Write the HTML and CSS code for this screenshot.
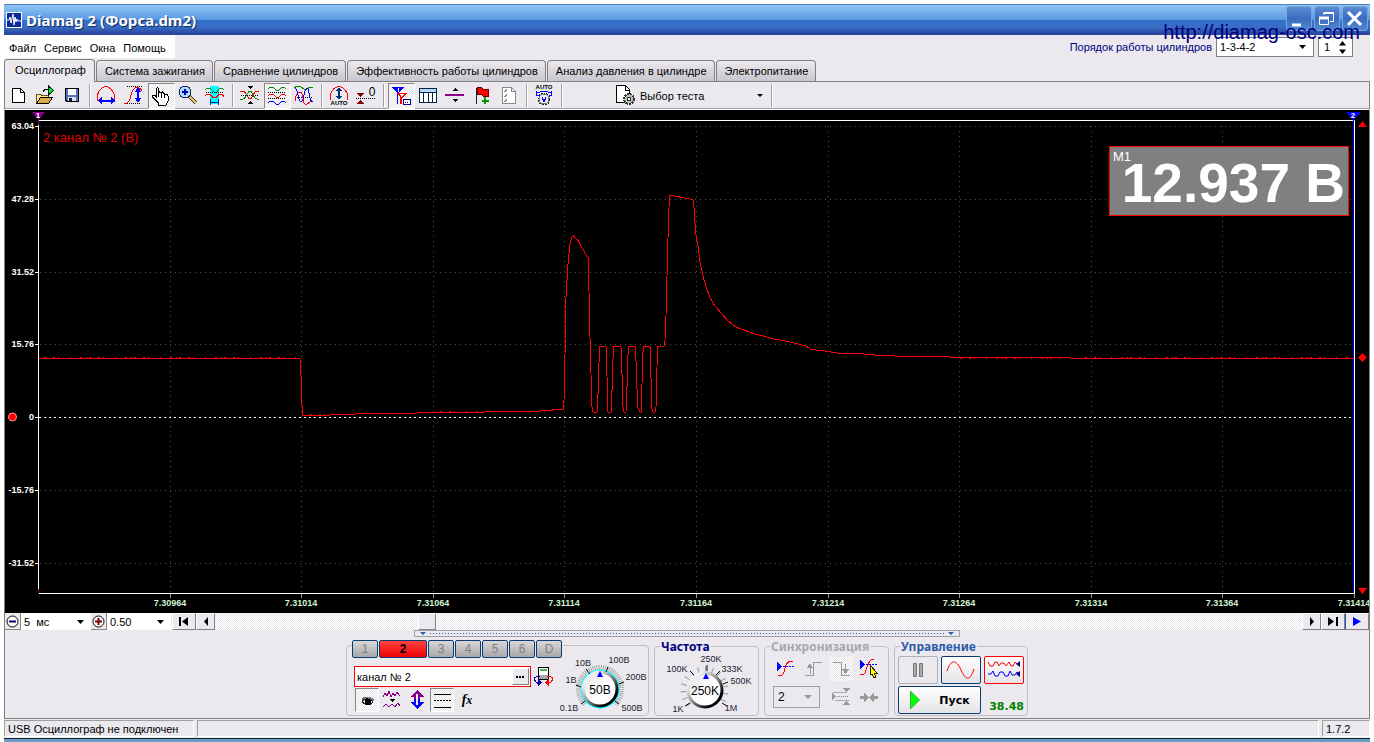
FILE: index.html
```html
<!DOCTYPE html>
<html lang="ru">
<head>
<meta charset="utf-8">
<title>Diamag 2 (Форса.dm2)</title>
<link rel="stylesheet" href="styles.css">
</head>
<body>
<div class="window">
  <header class="titlebar">
    <svg class="app-icon" width="16" height="16" viewBox="0 0 16 16"><rect x=".5" y=".5" width="15" height="15" fill="#0a2a9a" stroke="#fff"/><path d="M1 8h2l1-3 1 6 2-9 1 11 1-8 1 5 1-3 1 2h3" fill="none" stroke="#fff"/></svg>
    <h1>Diamag 2 (Форса.dm2)</h1>
    <div class="win-buttons">
      <button aria-label="Свернуть"><svg width="24" height="24"><path d="M5 18h9" stroke="#fff" stroke-width="3"/></svg></button>
      <button aria-label="Развернуть"><svg width="24" height="24" fill="none" stroke="#fff"><path d="M9 8V5.500h9.500v9H15" /><path d="M8.500 6h10.500" stroke-width="2"/><path d="M4.500 10.500h9v7h-9z"/><path d="M4 11h10" stroke-width="3"/></svg></button>
      <button aria-label="Закрыть"><svg width="24" height="24"><path d="M5 5l13 13M18 5L5 18" stroke="#fff" stroke-width="3"/></svg></button>
    </div>
    <a class="site" href="#">http://diamag-osc.com</a>
  </header>

  <div class="menurow">
    <nav class="menu"><button>Файл</button><button>Сервис</button><button>Окна</button><button>Помощь</button></nav>
    <div class="order">
      <label for="order">Порядок работы цилиндров</label>
      <select id="order" class="drop order-select"><option>1-3-4-2</option></select>
      <span class="spin"><input type="text" value="1" aria-label="Цилиндр"><svg width="9" height="13"><path d="M1 4.500h7L4.500 0zM1 8.500h7L4.500 13z"/></svg></span>
    </div>
  </div>

  <nav class="tabs">
    <button class="active">Осциллограф</button><button>Система зажигания</button><button>Сравнение цилиндров</button><button>Эффективность работы цилиндров</button><button>Анализ давления в цилиндре</button><button>Электропитание</button>
  </nav>

  <div class="toolbar">
    <button aria-label="Новый"><svg viewBox="0 0 24 24"><path d="M6.500 4.500h8l4 4v9.500h-12zM14.500 4.500v4h4" fill="#fff" stroke="#000"/></svg></button>
    <button aria-label="Открыть"><svg viewBox="0 0 24 24"><path d="M3.500 19v-9h4l1 1h7v3" fill="#ffe98a" stroke="#665522"/><path d="M3.500 19.500l4-6h12l-4 6z" fill="#d9a94a" stroke="#000"/><path d="M10 8c1-3 3-3 5-3" fill="none" stroke="#000"/><path d="M15.500 2v9l5-4.500z" fill="#0d3" stroke="#020"/></svg></button>
    <button aria-label="Сохранить"><svg viewBox="0 0 24 24"><path d="M5.500 4.500h13v13H7l-1.500-1.500z" fill="#5472b8" stroke="#000"/><path d="M8 5h8v6H8z" fill="#fff"/><path d="M8 13h8v4H8z" fill="#dde"/><path d="M9 14h3v3H9z" fill="#024"/></svg></button>
    <i class="sep"></i>
    <button aria-label="Период"><svg viewBox="0 0 24 24"><path d="M2.500 17V11c1-5 5-8 8-8.500 4 0 7 3.500 9 8.500v6" fill="none" stroke="red"/><path d="M4 16.500h16" stroke="#00f" stroke-width="2"/><path d="M7 13v7l-4-3.500zM16 13v7l4-3.500z" fill="#00f"/></svg></button>
    <button aria-label="Амплитуда"><svg viewBox="0 0 24 24"><path d="M5 2.500h15M5 19.500h13" stroke="#000" stroke-dasharray="1 1"/><path d="M2 19.500c5 0 6-3 7-8s3-8 6-8 4 1 5 3" fill="none" stroke="red"/><path d="M16 5v13" stroke="#00f" stroke-width="2"/><path d="M12.500 8h7L16 3zM12.500 14h7l-3.500 5z" fill="#00f"/></svg></button>
    <button class="on" aria-label="Рука"><svg viewBox="0 0 24 24"><path d="M9.500 21v-2l-6-6v-2h2l2 2V4.500l1-1 1 1V9l1-1 2 1 1-1 2 2h2l1.500 2v5l-2 4z" fill="#fff" stroke="#000"/><path d="M9.500 9v4M12.500 10v4M15.500 10v4" stroke="#000"/></svg></button>
    <button aria-label="Лупа"><svg viewBox="0 0 24 24"><path d="M13 12l7 7" stroke="#333" stroke-width="4"/><path d="M14 13l6 6" stroke="#e9c258" stroke-width="2"/><circle cx="9" cy="8" r="6" fill="#a8dcfa" stroke="#226"/><path d="M6 8h6M9 5v6" stroke="#00a" stroke-width="2"/></svg></button>
    <button aria-label="Выделение"><svg viewBox="0 0 24 24"><path d="M7 2h9v18H7z" fill="#0ff"/><path d="M2 6l2-2h3l4 4h3l3-4h2l2 2" fill="none" stroke="#0a8a2a"/><path d="M3 8.500h18" stroke="#000" stroke-dasharray="1 1"/><path d="M2 11.500l2-1h3l3 3h3l3-3h3l2 2" fill="none" stroke="red"/><path d="M7.500 15v6M15.500 15v6M8 18.500h7" stroke="#003090"/></svg></button>
    <i class="sep"></i>
    <button aria-label="Наложение"><svg viewBox="0 0 24 24"><path d="M3 11.500h18" stroke="#000" stroke-dasharray="1 1"/><path d="M2 7h3c4 1 4 8 7 8s3-8 7-8h2" fill="none" stroke="red"/><path d="M2 15h3c4-1 4-8 7-8s3 8 7 8h2" fill="none" stroke="#080"/><path d="M9 2h6l-3 3zM9 20h6l-3-3z"/></svg></button>
    <button class="on" aria-label="Раздельно"><svg viewBox="0 0 24 24" fill="none"><path d="M3 5l2-2h3l3 3h3l3-3h2l2 2" stroke="#080"/><path d="M3 8.500h18M3 14.500h18" stroke="#000" stroke-dasharray="1 1"/><path d="M3 12l2-2h3l3 3h3l3-3h2l2 2" stroke="red"/><path d="M3 19l2-2h3l3 3h3l3-3h2l2 2" stroke="#00f"/></svg></button>
    <button aria-label="Совмещение"><svg viewBox="0 0 24 24" fill="none"><path d="M2 4l3-2h3l4 3h3l3-2 3 1" stroke="#080"/><path d="M3 13.500h18" stroke="#000" stroke-dasharray="1 1"/><path d="M3 17c1-11 8-11 8-3s3 6 4 6 2-2 5-3" stroke="red"/><path d="M3 4c3 0 3 14 6 14s3-14 6-14 1 14 6 14" stroke="#00f"/></svg></button>
    <i class="sep"></i>
    <button aria-label="Авто"><svg viewBox="0 0 24 24"><path d="M3.500 16v-6c1-4 5-7 8-7.500 4 0 7 3.500 9 7.500v6" fill="none" stroke="red"/><path d="M12 4v11" stroke="#003080" stroke-width="2"/><path d="M9 7h6l-3-4zM9 12h6l-3 4z" fill="#003080"/><text x="12" y="21" class="tiny">AUTO</text></svg></button>
    <button aria-label="Ноль"><svg viewBox="0 0 24 24"><path d="M2 14.500h19" stroke="#000" stroke-dasharray="1 1"/><path d="M3 9h7l-3.500 4zM3 20h7l-3.500-4z" fill="#800000"/><text x="18" y="12" class="zero">0</text></svg></button>
    <i class="sep"></i>
    <button class="on" aria-label="Фильтр"><svg viewBox="0 0 24 24"><path d="M3 3h12l-6 7z" fill="#00f"/><path d="M8.500 8v12" stroke="#00f"/><path d="M7 9h11l-5 6z" fill="red"/><path d="M12 13v7" stroke="red" stroke-width="2"/><path d="M9.500 4v4M11 10.500h3l-2 2" stroke="#fff" fill="none"/><path d="M14.500 15.500h7v5h-7z" fill="#fff" stroke="#008"/><path d="M16 18.500h4" stroke="#008" stroke-dasharray="1 1"/></svg></button>
    <button aria-label="Таблица"><svg viewBox="0 0 24 24"><path d="M3.500 4.500h17v14h-17z" fill="#fff" stroke="#024"/><path d="M4 5h16v3H4z" fill="#b4d8fa"/><path d="M4 8.500h16M7.500 8v10M12.500 8v10M16.500 8v10" stroke="#024"/></svg></button>
    <button aria-label="Линия"><svg viewBox="0 0 24 24"><path d="M2 11h19" stroke="#808" stroke-width="2"/><path d="M9 7h6l-3-3zM9 15h6l-3 3z"/></svg></button>
    <button aria-label="Флаг"><svg viewBox="0 0 24 24"><path d="M6.500 4v16" stroke="#222"/><path d="M7 4l4-1 2 2h5v7h-5l-2-2-4 1z" fill="red" stroke="#600"/><path d="M15 13v7M12 16.500h7" stroke="#090" stroke-width="2"/></svg></button>
    <button aria-label="Протокол"><svg viewBox="0 0 24 24"><path d="M5.500 3.500h9l4 4v12h-13z" fill="#fff" stroke="#888"/><path d="M14.500 3.500v4h4M7 7l1 1 2-3M7 12l1 1 2-3M7 17l1 1 2-3" fill="none" stroke="#888"/></svg></button>
    <i class="sep"></i>
    <button aria-label="Автонастройка"><svg viewBox="0 0 24 24"><text x="12" y="5" class="tiny">AUTO</text><circle cx="12" cy="15" r="6" fill="#eee" stroke="#222" stroke-dasharray="2 1"/><circle cx="12" cy="15" r="5" fill="#eee" stroke="#777"/><path d="M5 9c4-2 10-2 14 0M4.500 7v4h3M19.500 7v4h-3" fill="none" stroke="#00f"/><path d="M10 13l2 5 2-5" fill="none" stroke="#00f"/></svg></button>
    <i class="sep"></i>
    <label class="test"><svg viewBox="0 0 24 24"><path d="M4.500 1.500h9l4 4v13h-13z" fill="#fff" stroke="#000"/><path d="M13.500 1.500v5h4" fill="none" stroke="#000"/><circle cx="17" cy="15" r="5" fill="#b8c4b8" stroke="#333" stroke-width="2" stroke-dasharray="2 1"/><circle cx="17" cy="15" r="2" fill="#fff" stroke="#333"/></svg><select class="test-select" aria-label="Выбор теста"><option>Выбор теста</option></select></label>
    <i class="sep"></i>
  </div>

  <svg class="plot" viewBox="5 110 1364 503" role="img" aria-label="Осциллограмма">
    <rect x="5" y="110" width="1364" height="503"/>
    <g class="grid">
      <path d="M40 126.500H1352M40 199.500H1352M40 272.500H1352M40 344.500H1352M40 490.500H1352M40 563.500H1352"/>
      <path d="M170.500 126V592M301.500 126V592M433.500 126V592M564.500 126V592M696.500 126V592M828.500 126V592M959.500 126V592M1091.500 126V592M1222.500 126V592"/>
    </g>
    <path class="zero-line" d="M39 417.500H1353"/>
    <path class="frame" d="M35 126.500h4M35 199.500h4M35 272.500h4M35 344.500h4M35 417.500h4M35 490.500h4M35 563.500h4M38.500 593.500V120.500H1354.500V593.500z"/>
    <path class="ticks" d="M170.500 594v4M301.500 594v4M433.500 594v4M564.500 594v4M696.500 594v4M828.500 594v4M959.500 594v4M1091.500 594v4M1222.500 594v4M1354.500 594v4"/>
    <path d="M1353.500 119V593" stroke="#00f"/>
    <path d="M38.500 119v6M38.500 589v5" stroke="#808"/>
    <path class="trace" d="M39 358.500H300L301 376L302 405L303 415.500H320L340 414.500L370 413.500H405L430 412.500H470L500 411.500H530L550 410.500L555 409.500L563 410L564 400L565 355L565.500 306L567 280L568 264L570 245L571 240L572 237L573.500 236L575 238L578 240.500L581 246L584 251L587 257L588.500 258L589 292L590 337L591 374L592 407L593 412H597L598 394L599 362L600 346.500H606L607 376L608 412H611L612 391L613 359L614 346.500H621L622 374L623 407L624 412H626L627 387L628 355L629 346.500H635L636 361L637 389L638 408L640 412H641.500L642 384L643 352L644 346.500H649L650.500 348L651 378L652 409L653 412H655L656 407L657 367L658 346.500H664L665 340L666 315L667 276L668 238L669 208L669.500 196L671 195.500L680 197L693 199.500L694 207L695 223L696 235L698 246L700 262L703 276L706 287L710 298L715 306L722 314L728 321L736 327L745 330.500L755 334L765 336.500L773 339L780 340L790 342L800 344.500L806 346L811 349.500L825 351L840 353.500H858L880 355.500L910 356.500H940L959 357.500H1060L1080 358.500H1354"/>
    <path class="jitter" d="M44 357.500H298M850 353.500h8M960 358.500H1060M1085 357.500H1350"/>
    <path class="jitter" d="M310 414.500h30M440 411.500h110"/>
    <path d="M32 112h13l-6.500 8z" fill="#808"/><text class="mark" x="38" y="118">1</text>
    <path d="M1346 112h15l-7.500 8z" fill="#00f"/><text class="mark" x="1353" y="118">2</text>
    <path d="M1358 127h9l-4.500-6zM1358 588h9l-4.500 6zM1358 357.500l4.500-4.500 4.500 4.500-4.500 4.500z" fill="red"/>
    <circle cx="12.500" cy="417" r="4" fill="red" stroke="#f99"/>
    <g class="ylab"><text x="34" y="129">63.04</text><text x="34" y="202">47.28</text><text x="34" y="275">31.52</text><text x="34" y="347">15.76</text><text x="34" y="420">0</text><text x="34" y="493">-15.76</text><text x="34" y="566">-31.52</text></g>
    <g class="xlab"><text x="170" y="606">7.30964</text><text x="301" y="606">7.31014</text><text x="433" y="606">7.31064</text><text x="564" y="606">7.31114</text><text x="696" y="606">7.31164</text><text x="828" y="606">7.31214</text><text x="959" y="606">7.31264</text><text x="1091" y="606">7.31314</text><text x="1222" y="606">7.31364</text><text x="1354" y="606">7.31414</text></g>
    <text class="chan-name" x="43" y="142">2 канал № 2 (В)</text>
    <rect x="1109.500" y="146.500" width="239" height="69" fill="#808080" stroke="red"/>
    <text class="m1" x="1113" y="161">M1</text>
    <text class="reading" x="1345" y="202">12.937 В</text>
  </svg>

  <div class="scrollrow">
    <button class="sq" aria-label="Меньше"><svg width="13" height="13"><circle cx="6.500" cy="6.500" r="5.500" fill="#fff" stroke="#000"/><path d="M3 6.500h7" stroke="#006" stroke-width="2"/></svg></button>
    <select class="drop scale-a" aria-label="Развёртка"><option>5 &nbsp;мс</option></select>
    <button class="sq" aria-label="Больше"><svg width="13" height="13"><circle cx="6.500" cy="6.500" r="5.500" fill="#fff" stroke="#000"/><path d="M3 6.500h7M6.500 3v7" stroke="#800000" stroke-width="2"/></svg></button>
    <select class="drop scale-b" aria-label="Масштаб"><option>0.50</option></select>
    <button class="nav wide" aria-label="В начало"><svg width="12" height="9"><path d="M1 0h2v9H1zM10 0v9L4 4.500z"/></svg></button>
    <button class="nav" aria-label="Назад"><svg width="6" height="9"><path d="M5 0v9L1 4.500z"/></svg></button>
    <input class="scroll" type="range" min="0" max="1000" value="190" aria-label="Позиция">
    <button class="nav" aria-label="Вперёд"><svg width="6" height="9"><path d="M1 0v9l4-4.500z"/></svg></button>
    <button class="nav wide" aria-label="В конец"><svg width="12" height="9"><path d="M1 0v9l6-4.500zM9 0h2v9H9z"/></svg></button>
    <button class="nav wide play" aria-label="Воспроизвести"><svg width="10" height="9"><path d="M1 0v9l8-4.500z" fill="#00f"/></svg></button>
  </div>

  <div class="panel">
    <div class="splitter"><i class="tri"></i><i class="dots"></i><i class="tri"></i></div>
    <div class="groups">
      <section class="group channel">
        <div class="chan-left">
          <div class="chan-tabs"><button>1</button><button class="sel">2</button><button>3</button><button>4</button><button>5</button><button>6</button><button>D</button></div>
          <div class="name-row">
            <div class="name"><input type="text" value="канал № 2" aria-label="Имя канала"><button aria-label="Обзор"><svg width="9" height="2"><path d="M0 0h2v2H0zM3 0h2v2H3zM6 0h2v2H6z"/></svg></button></div>
            <button class="ico" aria-label="Сменить датчик"><svg viewBox="0 0 24 24"><path d="M7.500 2.500h10v12h-10z" fill="#fff" stroke="#000"/><path d="M9 4h7v2H9z" fill="#5a5"/><path d="M8 10h9v4H8z" fill="#aaa"/><path d="M9 12c-6-1-7 2-4 5" fill="none" stroke="#00a"/><path d="M4 17h3v-3l4 3.500-4 3.500v-2z" fill="#00a"/><path d="M16 12c6-1 7 2 4 5h-4" fill="none" stroke="red"/><path d="M18 14v7l-4-3.500z" fill="red"/></svg></button>
          </div>
          <div class="icon-row">
            <button class="ico on" aria-label="Видимость"><svg viewBox="0 0 24 24"><path d="M6 11c3-4 11-3 13 1l-1 3-4-3H8z" fill="#777"/><path d="M7 13c3-3 8-3 11 1-3 4-8 4-11-1z" fill="#ddd" stroke="#222"/><circle cx="13" cy="14" r="3"/></svg></button>
            <button class="ico" aria-label="Сглаживание"><svg viewBox="0 0 24 24"><path d="M3 9l2-4 2 3 2-5 2 6 2-4 2 3 2-4 3 4M3 19l3-3 3 3 3-3 3 3 3-4 2 3" fill="none" stroke="#808"/><path d="M9 11h6l-3 3z"/></svg></button>
            <button class="ico" aria-label="Инверсия"><svg viewBox="0 0 24 24"><path d="M12 2l7 7h-4v3H9V9H5z" fill="#808"/><path d="M12 21l7-7h-4v-3H9v3H5z" fill="#00f"/><path d="M12 6v11" stroke="#ebe9ed" stroke-width="2"/></svg></button>
            <button class="ico on" aria-label="Линии"><svg viewBox="0 0 24 24"><path d="M4 6.500h17M4 19.500h17" stroke="#000"/><path d="M4 12.500h17" stroke="#000" stroke-dasharray="2 1"/></svg></button>
            <button class="ico fx" aria-label="Функция">f<sub>x</sub></button>
          </div>
        </div>
        <svg class="knob-a" viewBox="558 652 92 64" role="img" aria-label="Диапазон 50В">
          <defs><linearGradient id="k" x1="0" y1="0" x2="1" y2="1"><stop offset=".2" stop-color="#eee"/><stop offset=".5" stop-color="#888"/><stop offset=".8" stop-color="#000"/></linearGradient><linearGradient id="f" x1="0" y1="0" x2="1" y2="1"><stop offset="0" stop-color="#ddd"/><stop offset=".5" stop-color="#fff"/></linearGradient></defs>
          <path d="M585.200 704.800A21 21 0 1 1 614.800 704.800" fill="none" stroke="#aaa" stroke-width="6" stroke-dasharray="1 1"/>
          <circle cx="600" cy="690" r="18" fill="url(#f)" stroke="#0ff" stroke-width="3"/><circle cx="600" cy="690" r="17" fill="none" stroke="url(#k)" stroke-width="3"/>
          <path d="M581 705l4-3M576 686l5 2M586 670l4 5M608 668l-2 5M624 683l-5 2M619 705l-4-3" stroke="#000"/>
          <path d="M597 678h6l-3-6z" fill="#00f"/>
          <text class="val" x="600" y="695">50В</text>
          <g class="tick"><text x="569" y="712">0.1В</text><text x="571" y="684">1В</text><text x="583" y="667">10В</text><text x="619" y="664">100В</text><text x="636" y="681">200В</text><text x="632" y="712">500В</text></g>
        </svg>
      </section>
      <fieldset class="group freq"><legend>Частота</legend>
        <svg class="knob-b" viewBox="660 652 94 64" role="img" aria-label="Частота 250K">
          <path d="M689.200 704.800A21 21 0 1 1 719.800 704.800" fill="none" stroke="#999" stroke-width="6" stroke-dasharray="1 6"/>
          <circle cx="705" cy="690" r="17" fill="url(#f)" stroke="url(#k)" stroke-width="3"/>
          <path d="M685 706l5-3M690 671l4 4M707 665v6M720 671l-4 4M728 682l-5 2M727 706l-5-3" stroke="#000"/>
          <path d="M703 679h6l-3-6z" fill="#00f"/>
          <text class="val" x="705" y="695">250K</text>
          <g class="tick"><text x="678" y="712">1K</text><text x="677" y="672">100K</text><text x="711" y="662">250K</text><text x="732" y="672">333K</text><text x="741" y="684">500K</text><text x="731" y="711">1M</text></g>
        </svg>
      </fieldset>
      <fieldset class="group sync"><legend>Синхронизация</legend>
        <div class="sync-grid">
          <button class="ico" aria-label="Синхронизация"><svg viewBox="0 0 24 24"><path d="M5 19c6 0 6-4 7-8s3-8 8-6" fill="none" stroke="red"/><path d="M4 9.500h17" stroke="#00f" stroke-dasharray="2 1"/><path d="M4 5v9l5-4.500z" fill="#00f"/></svg></button>
          <button class="ico" aria-label="Фронт"><svg viewBox="0 0 24 24"><path d="M4 18.500h8.500v-13h8" fill="none" stroke="#999"/><path d="M9.500 17v-8" stroke="#999"/><path d="M6 11h6l-3-5z" fill="#999"/></svg></button>
          <button class="ico on-flat" aria-label="Спад"><svg viewBox="0 0 24 24"><path d="M4 5.500h8.500v13h8" fill="none" stroke="#999"/><path d="M16.500 7v6" stroke="#999"/><path d="M13 12h7l-3.500 5z" fill="#999"/></svg></button>
          <button class="ico" aria-label="Указать"><svg viewBox="0 0 24 24"><path d="M3 18c6 0 5-3 7-8s3-8 7-8" fill="none" stroke="red"/><path d="M3 7.500h18" stroke="#00f" stroke-dasharray="2 1"/><path d="M3 3v9l5-4.500z" fill="#00f"/><path d="M13 8v10l2-1 2 4 2-1-2-4h3z" fill="#ff0" stroke="#220"/></svg></button>
          <select class="drop sync-select" aria-label="Канал синхронизации" disabled><option>2</option></select>
          <button class="ico" aria-label="Уровень"><svg viewBox="0 0 24 24"><path d="M4 7.500h14M6 15.500h14" stroke="#aaa"/><path d="M6 11.500h13" stroke="#888" stroke-dasharray="1 1"/><path d="M13 3h8l-4 4zM13 20h8l-4-4zM3 8v7l4-3.500z" fill="#999"/></svg></button>
          <button class="ico" aria-label="Центр"><svg viewBox="0 0 24 24"><path d="M3 12.500h5M16 12.500h5" stroke="#999" stroke-width="3"/><path d="M7 8v9l5-4.500zM17 8v9l-5-4.500z" fill="#999"/></svg></button>
        </div>
      </fieldset>
      <fieldset class="group control"><legend>Управление</legend>
        <div class="ctl-grid">
          <button class="ctl dim" aria-label="Пауза"><svg width="14" height="16"><path d="M2.500 1.500h3v13h-3zM8.500 1.500h3v13h-3z" fill="#aaa" stroke="#777"/></svg></button>
          <button class="ctl" aria-label="Одиночный"><svg width="30" height="20"><path d="M1 11C5-1 10-1 15 10s9 11 13-1" fill="none" stroke="red"/></svg></button>
          <button class="ctl red" aria-label="Непрерывный"><svg width="34" height="20" fill="none"><path d="M1 2l2 4h3l2-4h2l2 4 2-3 3 0 2 3 3-4 2 4h2l2-4 2 2h3" stroke="red"/><path d="M1 14h3l2-3 2 5h3l2-4h3l2 4h3l2-5 2 4 3 0 2-3 3 2" stroke="#00f"/><path d="M33 1v6l-4-3zM33 11v6l-4-3z" fill="#008"/></svg></button>
          <button class="start"><svg width="12" height="20"><path d="M1.500 1v18l9-9z" fill="#0f0" stroke="#4a4"/></svg>Пуск</button>
          <output class="rate">38.48</output>
        </div>
      </fieldset>
    </div>
  </div>

  <footer class="status"><span class="s1">USB Осциллограф не подключен</span><span class="s2"></span><span class="s3">1.7.2</span></footer>
</div>
</body>
</html>
```

FILE: styles.css
```css
* { box-sizing: border-box; }
body { margin: 0; padding: 4px 4px 0; background: #fff; font: 11px "Liberation Sans", Arial, sans-serif; color: #000; }
button, select, input { font: inherit; color: inherit; margin: 0; padding: 0; border: 0; border-radius: 0; background: none; }
select { appearance: none; }
h1 { margin: 0; }
svg { display: block; flex: none; }

.window { background: #ebe9ed; border-bottom: 3px solid #6a9cc8; }

.titlebar { position: relative; display: flex; align-items: center; gap: 4px; height: 31px; padding: 0 2px; background: linear-gradient(#3c62b4 0, #8cc4f0 5%, #5a9ae4 50%, #3272cc 52%, #3a6cc4 75%, #2a48a0 95%); }
.titlebar h1 { flex: 1; color: #fff; font: bold 15px "Noto Sans", sans-serif; text-shadow: 1px 1px 1px #102860; }
.win-buttons { display: flex; gap: 2px; align-self: flex-start; padding-top: 2px; }
.win-buttons button { width: 26px; height: 25px; border: 1px solid #7aa4dc; border-radius: 3px; background: linear-gradient(#5a8cd4, #3a6cc0 50%, #5088d0); }
.site { position: absolute; right: 10px; top: 16px; color: #000080; font-size: 20px; line-height: 24px; text-decoration: none; }

.menurow { display: flex; justify-content: space-between; height: 24px; }
.menu { display: flex; gap: 8px; height: 23px; padding: 2px 9px 0 5px; background: #fff; font-size: 11px; }
.order { display: flex; align-items: flex-start; gap: 4px; padding: 2px 17px 0 0; color: #000080; }
.order label { line-height: 20px; }
.drop { height: 17px; padding: 0 4px; background: #fff url("data:image/svg+xml,%3Csvg xmlns='http://www.w3.org/2000/svg' width='7' height='4'%3E%3Cpath d='M0 0h7L3.5 4z'/%3E%3C/svg%3E") no-repeat right 7px center; color: #000; }
.order-select { width: 98px; height: 20px; padding: 0 3px 1px; border: 1px solid #808080; }
.spin { display: flex; align-items: center; width: 35px; height: 20px; padding: 0 5px; border: 1px solid #808080; background: #fff; color: #000; }
.spin input { flex: 1; width: 10px; }

.tabs { display: flex; align-items: flex-end; gap: 1px; height: 23px; border-bottom: 1px solid #808080; }
.tabs button { height: 21px; padding: 0 7px 0 8px; border: 1px solid #808080; border-bottom: 0; border-radius: 4px 4px 0 0; background: linear-gradient(#eceaee, #c8c6ce); white-space: nowrap; }
.tabs .active { height: 23px; margin-bottom: -1px; padding: 0 8px 2px 10px; background: #ebe9ed; }

.toolbar { display: flex; align-items: center; height: 28px; border: 1px solid #808080; border-width: 0 1px 1px; border-bottom-color: #fff; box-shadow: inset 0 -1px #a0a0a8; }
.toolbar button { width: 27px; height: 26px; padding: 0; }
.toolbar button svg, .test svg { width: 24px; height: 24px; }
.toolbar svg, .ico svg { shape-rendering: crispEdges; }
.toolbar button svg { margin-left: 1px; }
.sep { flex: none; width: 8px; height: 23px; background: linear-gradient(90deg, #a0a0a0 50%, #fff 50%) no-repeat center / 2px 100%; }
.on, .toolbar .on { border: 1px solid; border-color: #888 #fff #fff #888; background: repeating-conic-gradient(#fff 0 25%, #e6e4e8 0 50%) 0 0 / 2px 2px; }
.toolbar .on svg { margin-left: 0; }
.tiny { font: bold 6px "Liberation Sans", sans-serif; text-anchor: middle; }
.zero { font: 12px "Liberation Sans", sans-serif; text-anchor: middle; }
.test { display: flex; align-items: center; margin-left: 46px; width: 156px; }
.test-select { flex: 1; height: 22px; padding-left: 4px; background: url("data:image/svg+xml,%3Csvg xmlns='http://www.w3.org/2000/svg' width='6' height='3'%3E%3Cpath d='M0 0h6L3 3z'/%3E%3C/svg%3E") no-repeat right 5px center; }

.plot { width: 100%; height: auto; border: 1px solid #808080; border-width: 0 1px; background: #000; font-family: "Liberation Sans", Arial, sans-serif; }
.grid { stroke: #505050; stroke-dasharray: 1 4; }
.zero-line { stroke: #fff; stroke-dasharray: 2 3; }
.frame { fill: none; stroke: #fff; }
.ticks { stroke: #999; }
.trace { fill: none; stroke: #f00; stroke-linejoin: round; shape-rendering: crispEdges; }
.jitter { fill: none; stroke: #f00; stroke-dasharray: 2 7 2 3 1 11 1 9 2 4 1 2; }
.mark { fill: #fff; font-size: 8px; font-weight: bold; text-anchor: middle; }
.ylab { fill: #fff; font-size: 9px; font-weight: bold; text-anchor: end; }
.xlab { fill: #d0f4d0; font-size: 9px; font-weight: bold; text-anchor: middle; }
.chan-name { fill: #e00000; font-size: 13px; }
.m1 { fill: #fff; font-size: 13px; }
.reading { fill: #fff; font-size: 55px; font-weight: bold; text-anchor: end; }

.scrollrow { display: flex; height: 17px; border: 1px solid #808080; border-width: 0 1px; }
.sq { display: flex; align-items: center; justify-content: center; width: 16px; border-right: 1px solid #888; border-bottom: 1px solid #888; }
.scale-a { width: 70px; padding: 0 3px; }
.scale-b { width: 64px; padding: 0 3px; margin-right: 1px; }
.nav { display: flex; align-items: center; justify-content: center; width: 19px; border: 1px solid; border-color: #fff #808080 #808080 #fff; }
.nav.wide { width: 24px; }
.nav.play { border-left-color: #2a5ab0; }
.scroll { appearance: none; flex: 1; min-width: 0; height: 17px; background: repeating-conic-gradient(#fff 0 25%, #e8e6ea 0 50%) 0 0 / 2px 2px; }
.scroll::-webkit-slider-thumb { appearance: none; width: 18px; height: 17px; border: 1px solid; border-color: #fff #888 #888 #fff; background: #ebe9ed; }

.panel { padding-bottom: 2px; border: 1px solid #808080; border-top: 0; }
.splitter { display: flex; align-items: center; width: 546px; height: 7px; margin: 0 auto; padding: 0 5px; gap: 4px; border: 1px solid #a0a0a8; }
.tri { border: 3px solid transparent; border-top: 3px solid #2a5ab0; border-bottom: 0; }
.dots { flex: 1; height: 1px; background: repeating-linear-gradient(90deg, #2a5ab0 0 1px, transparent 1px 3px); }
.groups { display: flex; justify-content: center; gap: 5px; padding-top: 3px; }
.group { min-width: 0; height: 76px; margin: 0; padding: 0; border: 1px solid #c0c0c4; border-radius: 4px; }
.group legend { height: 13px; margin-left: 5px; padding: 0 1px; color: #000080; font: bold 11px/13px "Noto Sans", sans-serif; }
.group legend { font-size: 12px; }
.channel { display: flex; width: 303px; height: 71px; margin-top: 5px; padding: 0 0 0 5px; }
.chan-left { width: 206px; }
.chan-tabs { display: flex; gap: 1px; margin-top: -6px; width: 210px; }
.chan-tabs button { width: 26px; height: 18px; border: 1px solid #0a3c70; border-radius: 2px; background: linear-gradient(#d8d8d8, #a8a8a8); color: #808080; font-size: 12px; line-height: 16px; }
.chan-tabs .sel { width: 48px; background: linear-gradient(#f44, #e00); color: #000; font-weight: bold; }
.name-row { display: flex; align-items: center; height: 21px; margin: 8px 0 0 2px; }
.name { display: flex; width: 177px; height: 21px; padding: 1px; border: 1px solid #f00; background: #fff; }
.name input { flex: 1; min-width: 0; padding-left: 1px; }
.name button { display: flex; align-items: center; justify-content: center; width: 17px; border: 1px solid; border-color: #fff #808080 #808080 #fff; background: #ebe9ed; }
.ico { width: 24px; height: 24px; }
.ico svg { width: 24px; height: 24px; }
.ico.on svg { margin: -1px; }
.icon-row { display: flex; gap: 1px; margin: 1px 0 0 3px; }
.icon-row .fx { font: italic bold 14px "Liberation Serif", serif; }
.fx sub { font-size: 12px; vertical-align: baseline; }
.knob-a { width: 92px; height: 64px; margin-top: 5px; }
.knob-b { width: 94px; height: 64px; margin: -1px 0 0 5px; }
.val { font-size: 12px; text-anchor: middle; }
.tick { font-size: 9px; text-anchor: middle; fill: #223; }
.freq { width: 105px; }
.sync { width: 125px; }
.group.sync legend { color: #a8a8ac; }
.control { width: 134px; }
.group.control legend { color: #2a5aa8; }
.sync-grid { display: grid; grid-template-columns: repeat(4, 24px); gap: 4px; padding: 4px 0 0 8px; }
.on-flat { background: repeating-conic-gradient(#fff 0 25%, #e6e4e8 0 50%) 0 0 / 2px 2px; }
.sync-select { grid-column: span 2; width: 47px; height: 22px; margin-top: 1px; border: 1px solid #a0a0a0; background-color: #ebe9ed; background-image: url("data:image/svg+xml,%3Csvg xmlns='http://www.w3.org/2000/svg' width='8' height='4'%3E%3Cpath d='M0 0h8L4 4z' fill='%23999'/%3E%3C/svg%3E"); opacity: 1; font-size: 12px; }
.ctl-grid { display: grid; grid-template-columns: 40px 40px 40px; gap: 2px 3px; padding: 3px 0 0 3px; }
.ctl, .start { display: flex; align-items: center; justify-content: center; height: 28px; border: 1px solid #0a3c70; border-radius: 2px; background: linear-gradient(#fff, #e4e2e6); }
.ctl.dim { border-color: #b0b0b4; background: none; }
.ctl.red { border-color: #f00; }
.start { grid-column: span 2; gap: 18px; font: bold 11px "DejaVu Sans", sans-serif; }
.rate { align-self: end; padding-bottom: 1px; color: #008000; font: bold 11px "DejaVu Sans", sans-serif; text-align: right; }

.status { display: flex; gap: 3px; height: 20px; padding: 1px 0 0; border-bottom: 1px solid #123; font-size: 11px; }
.status span { height: 17px; padding-left: 3px; border: 1px solid; border-color: #a0a0a0 #fff #fff #a0a0a0; white-space: nowrap; line-height: 16px; }
.s1 { width: 190px; }
.s2 { flex: 1; }
.s3 { width: 48px; }
```
